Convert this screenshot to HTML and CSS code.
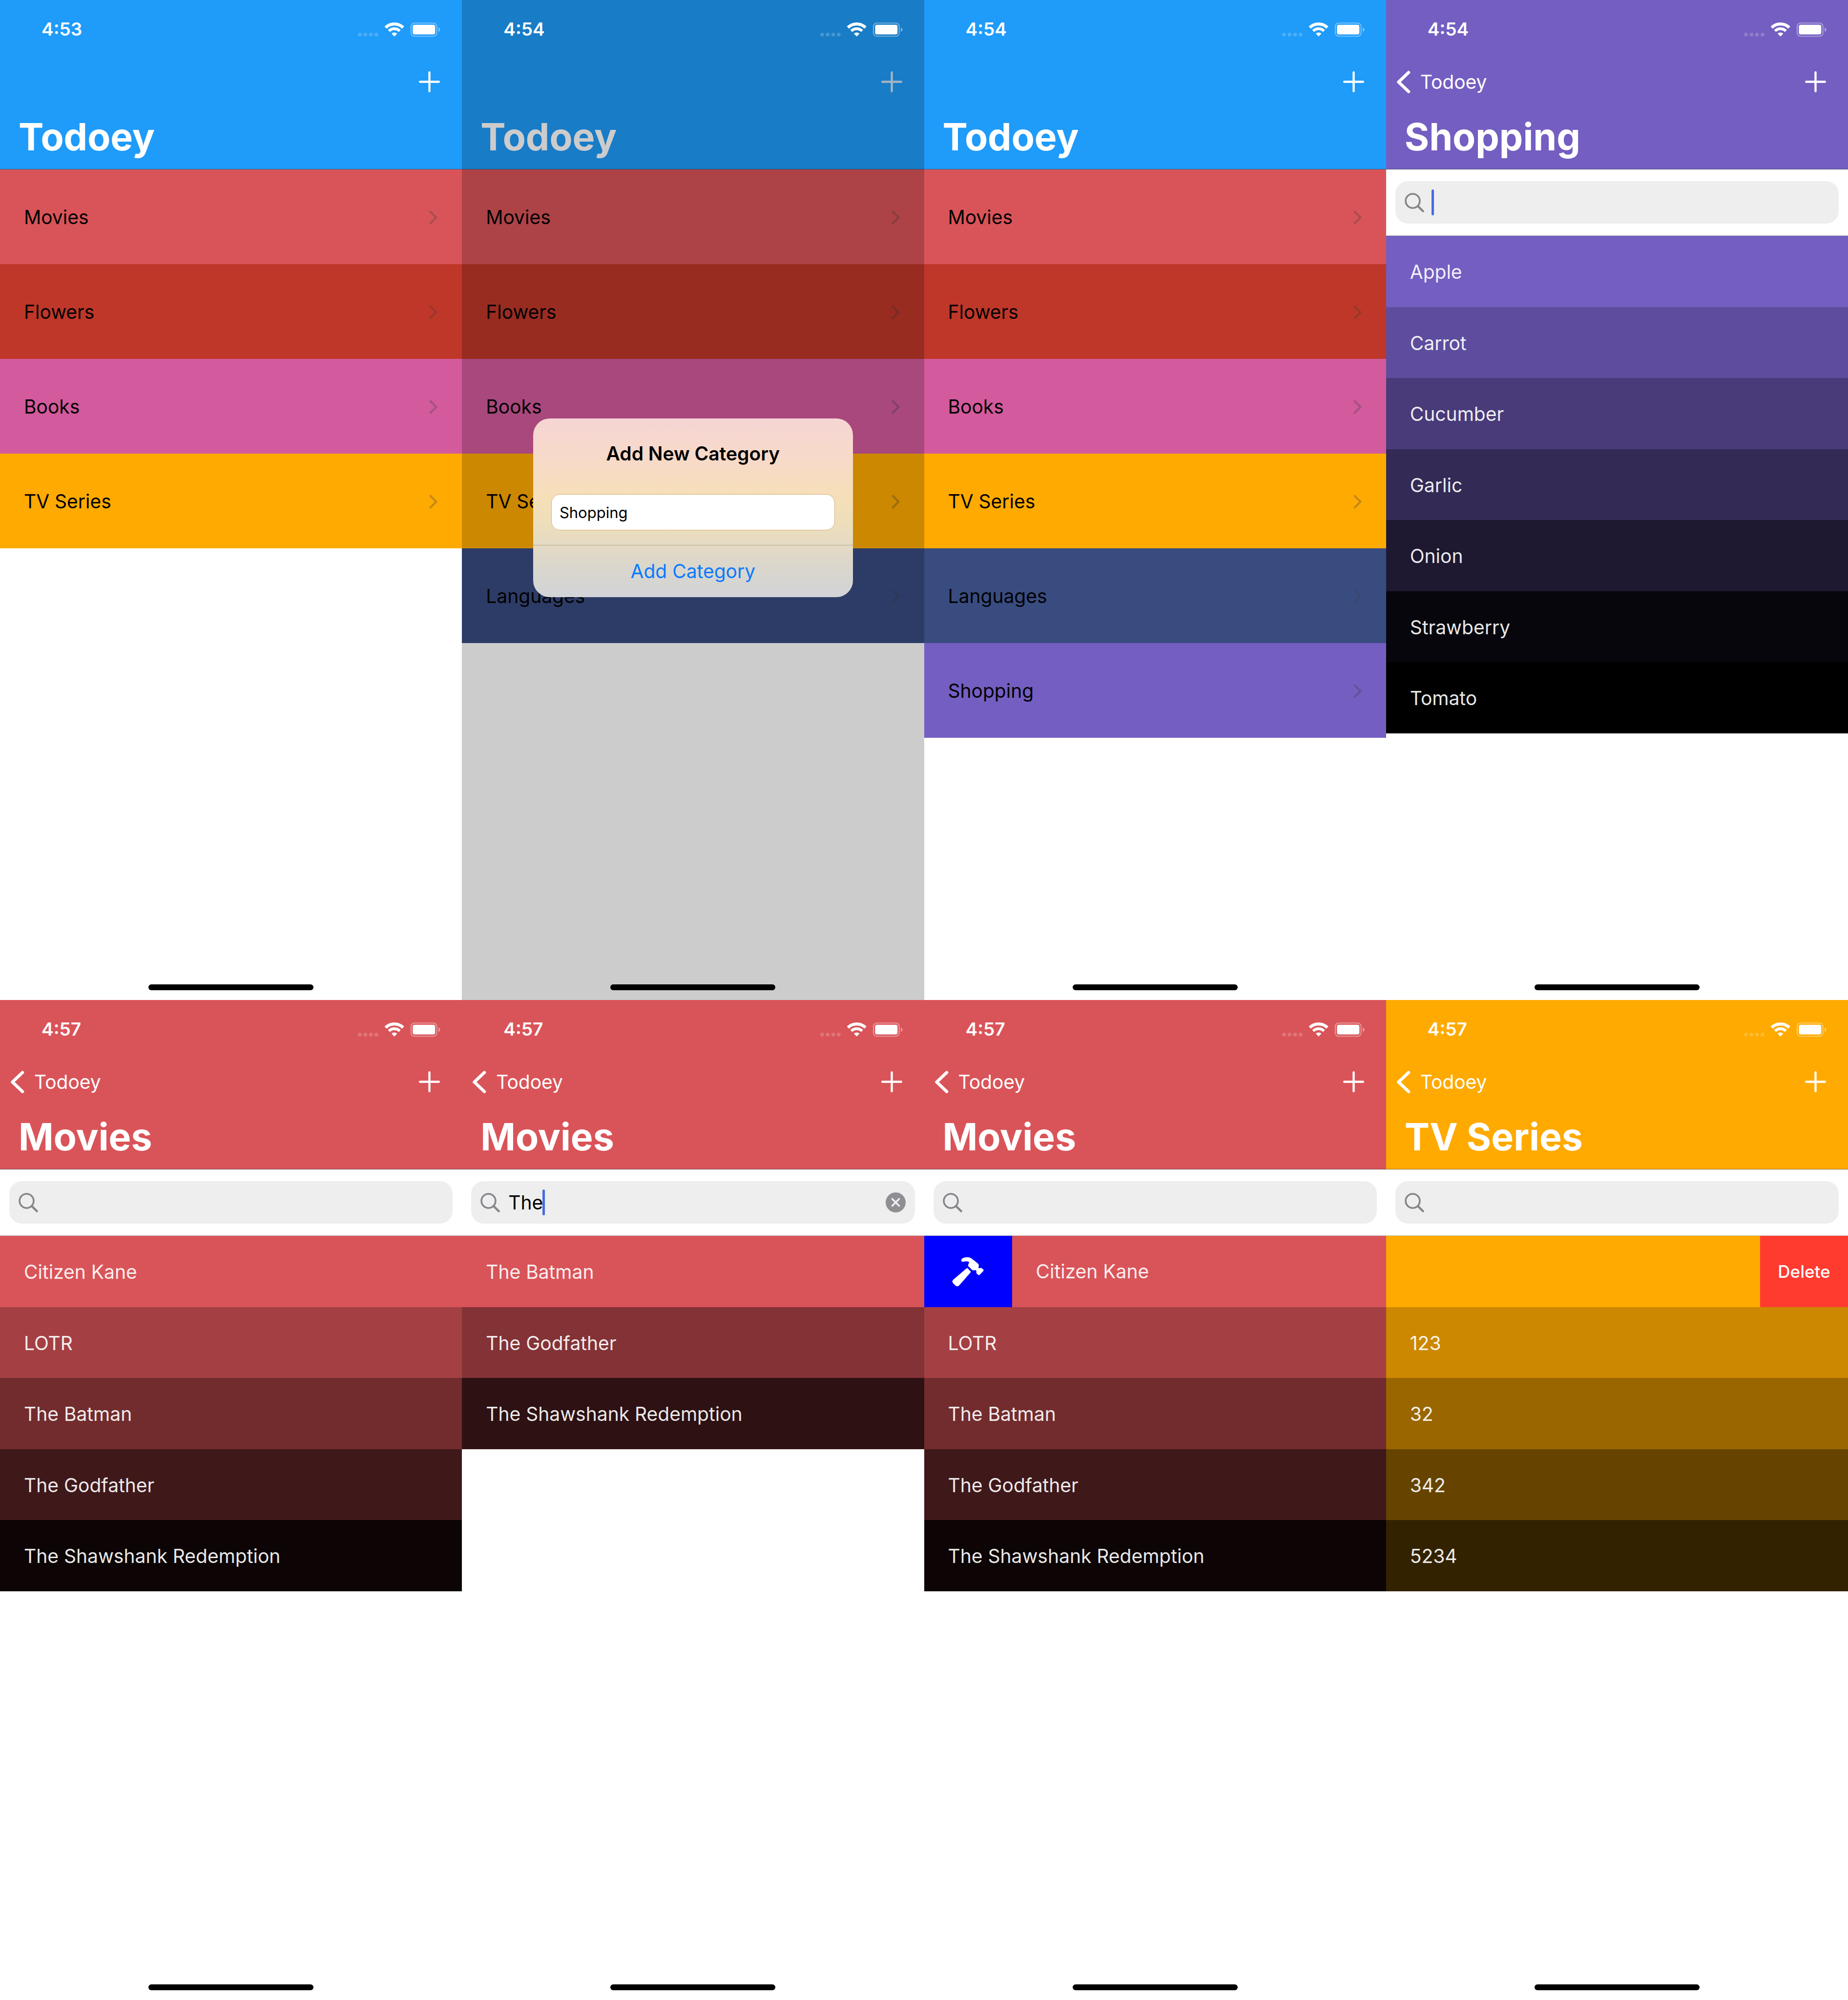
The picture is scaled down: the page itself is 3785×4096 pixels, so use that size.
FILE: index.html
```
<!DOCTYPE html>
<html lang="en">
<head>
<meta charset="utf-8">
<meta name="viewport" content="width=device-width, initial-scale=1">
<title>Todoey</title>
<link rel="stylesheet" href="styles.css">
</head>
<body>
<svg class="sprite" aria-hidden="true">
  <symbol id="status" viewBox="170 104 627 114">
    <g fill="currentColor" opacity=".2"><rect x="171" y="186" width="27" height="27" rx="8"/><rect x="213" y="186" width="27" height="27" rx="8"/><rect x="255" y="186" width="27" height="27" rx="8"/><rect x="297" y="186" width="27" height="27" rx="8"/></g>
    <g fill="none" stroke="currentColor"><path stroke-width="23" d="M380.500 146A94.500 94.500 0 0 1 513.500 146"/><path stroke-width="21" d="M406 172A58.500 58.500 0 0 1 488 172"/></g>
    <path fill="currentColor" stroke="currentColor" stroke-width="4" stroke-linejoin="round" d="M447 211L428.500 192A29 29 0 0 1 465.500 192Z"/>
    <rect x="574" y="112" width="196" height="100" rx="26" fill="none" stroke="currentColor" stroke-width="8" opacity=".4"/>
    <rect x="587" y="125" width="170" height="73" rx="14" fill="currentColor"/>
    <path fill="currentColor" opacity=".45" d="M783 145C790 148 795 154 795 162S790 176 783 179Z"/>
  </symbol>
  <symbol id="plus" viewBox="0 0 53 53"><path d="M26.500 2.700V50.300M2.700 26.500H50.300" fill="none" stroke="currentColor" stroke-width="5.400" stroke-linecap="round"/></symbol>
  <symbol id="back" viewBox="0 0 28 46"><path d="M24 3.500L3.500 23L24 42.500" fill="none" stroke="currentColor" stroke-width="6.500" stroke-linecap="round" stroke-linejoin="round"/></symbol>
  <symbol id="chevron" viewBox="0 0 17 29"><path d="M2.500 2.500L14.500 14.500L2.500 26.500" fill="none" stroke="currentColor" stroke-width="4" stroke-linecap="round" stroke-linejoin="round"/></symbol>
  <symbol id="search" viewBox="0 0 49 49"><g fill="none" stroke="currentColor" stroke-linecap="round"><circle cx="20.200" cy="20.200" r="17.700" stroke-width="4.400"/><path stroke-width="5.400" d="M33.500 33.500L46 46"/></g></symbol>
  <symbol id="clear" viewBox="0 0 41 41"><circle cx="20.500" cy="20.500" r="20.500" fill="#8e8e93"/><path d="M13.500 13.500L27.500 27.500M27.500 13.500L13.500 27.500" fill="none" stroke="#eeeeef" stroke-width="3.800" stroke-linecap="round"/></symbol>
  <symbol id="hammer" viewBox="63 61 240 240">
    <path fill="currentColor" d="M178 152L205 180C203 186 200 190 197 193L116 285Q102 297 88 285L69 266Q61 254 70 243L165 162Q172 157 178 152Z"/>
    <path fill="currentColor" d="M134 101C131 92 134 84 143 79C165 67 195 68 212 82L258 118Q267 127 265 140L262 152C268 155 276 153 284 152L299 163Q304 169 299 176L271 205Q264 210 258 203L247 192C246 185 247 178 246 173Q240 168 232 170L217 170L184 137C183 125 193 117 192 108C180 100 160 103 146 105Q138 107 134 101Z"/>
  </symbol>
</svg>

<main class="gallery">

  <section class="phone theme-blue">
    <header class="header">
      <div class="status"><time>4:53</time><svg class="status-icons"><use href="#status"/></svg></div>
      <nav class="nav"><button class="add" aria-label="Add"><svg><use href="#plus"/></svg></button></nav>
      <h1 class="title">Todoey</h1>
    </header>
    <ul class="categories">
      <li><a href="#" class="category red">Movies<svg><use href="#chevron"/></svg></a></li>
      <li><a href="#" class="category brick">Flowers<svg><use href="#chevron"/></svg></a></li>
      <li><a href="#" class="category pink">Books<svg><use href="#chevron"/></svg></a></li>
      <li><a href="#" class="category yellow">TV Series<svg><use href="#chevron"/></svg></a></li>
    </ul>
    <div class="home"></div>
  </section>

  <section class="phone theme-blue">
    <header class="header">
      <div class="status"><time>4:54</time><svg class="status-icons"><use href="#status"/></svg></div>
      <nav class="nav"><button class="add inactive" aria-label="Add"><svg><use href="#plus"/></svg></button></nav>
      <h1 class="title">Todoey</h1>
    </header>
    <ul class="categories">
      <li><a href="#" class="category red">Movies<svg><use href="#chevron"/></svg></a></li>
      <li><a href="#" class="category brick">Flowers<svg><use href="#chevron"/></svg></a></li>
      <li><a href="#" class="category pink">Books<svg><use href="#chevron"/></svg></a></li>
      <li><a href="#" class="category yellow">TV Series<svg><use href="#chevron"/></svg></a></li>
      <li><a href="#" class="category navy">Languages<svg><use href="#chevron"/></svg></a></li>
    </ul>
    <div class="home"></div>
    <div class="dim">
      <form class="alert" role="dialog" aria-labelledby="alert-title">
        <div class="alert-body">
          <h2 id="alert-title">Add New Category</h2>
          <input type="text" value="Shopping" aria-label="Category name">
        </div>
        <button type="button" class="alert-action">Add Category</button>
      </form>
    </div>
  </section>

  <section class="phone theme-blue">
    <header class="header">
      <div class="status"><time>4:54</time><svg class="status-icons"><use href="#status"/></svg></div>
      <nav class="nav"><button class="add" aria-label="Add"><svg><use href="#plus"/></svg></button></nav>
      <h1 class="title">Todoey</h1>
    </header>
    <ul class="categories">
      <li><a href="#" class="category red">Movies<svg><use href="#chevron"/></svg></a></li>
      <li><a href="#" class="category brick">Flowers<svg><use href="#chevron"/></svg></a></li>
      <li><a href="#" class="category pink">Books<svg><use href="#chevron"/></svg></a></li>
      <li><a href="#" class="category yellow">TV Series<svg><use href="#chevron"/></svg></a></li>
      <li><a href="#" class="category navy">Languages<svg><use href="#chevron"/></svg></a></li>
      <li><a href="#" class="category purple">Shopping<svg><use href="#chevron"/></svg></a></li>
    </ul>
    <div class="home"></div>
  </section>

  <section class="phone theme-purple">
    <header class="header">
      <div class="status"><time>4:54</time><svg class="status-icons"><use href="#status"/></svg></div>
      <nav class="nav"><a href="#" class="back"><svg><use href="#back"/></svg>Todoey</a><button class="add" aria-label="Add"><svg><use href="#plus"/></svg></button></nav>
      <h1 class="title">Shopping</h1>
    </header>
    <div class="search"><label class="field"><svg class="lens"><use href="#search"/></svg><input type="text" aria-label="Search"><span class="caret"></span></label></div>
    <ul class="items">
      <li style="background:#745ec1">Apple</li>
      <li style="background:#5e4d9e">Carrot</li>
      <li style="background:#493b79">Cucumber</li>
      <li style="background:#332a55">Garlic</li>
      <li style="background:#1e1830">Onion</li>
      <li style="background:#07060c">Strawberry</li>
      <li style="background:#000000">Tomato</li>
    </ul>
    <div class="home"></div>
  </section>

  <section class="phone theme-red">
    <header class="header">
      <div class="status"><time>4:57</time><svg class="status-icons"><use href="#status"/></svg></div>
      <nav class="nav"><a href="#" class="back"><svg><use href="#back"/></svg>Todoey</a><button class="add" aria-label="Add"><svg><use href="#plus"/></svg></button></nav>
      <h1 class="title">Movies</h1>
    </header>
    <div class="search"><label class="field"><svg class="lens"><use href="#search"/></svg><input type="text" aria-label="Search"></label></div>
    <ul class="items">
      <li style="background:#d95459">Citizen Kane</li>
      <li style="background:#a44043">LOTR</li>
      <li style="background:#722c2e">The Batman</li>
      <li style="background:#3f181a">The Godfather</li>
      <li style="background:#0c0405">The Shawshank Redemption</li>
    </ul>
    <div class="home"></div>
  </section>

  <section class="phone theme-red">
    <header class="header">
      <div class="status"><time>4:57</time><svg class="status-icons"><use href="#status"/></svg></div>
      <nav class="nav"><a href="#" class="back"><svg><use href="#back"/></svg>Todoey</a><button class="add" aria-label="Add"><svg><use href="#plus"/></svg></button></nav>
      <h1 class="title">Movies</h1>
    </header>
    <div class="search"><div class="field"><svg class="lens"><use href="#search"/></svg><input type="text" value="The" aria-label="Search"><span class="caret after-text"></span><button class="clear" aria-label="Clear"><svg><use href="#clear"/></svg></button></div></div>
    <ul class="items">
      <li style="background:#d95459">The Batman</li>
      <li style="background:#833236">The Godfather</li>
      <li style="background:#2d1113">The Shawshank Redemption</li>
    </ul>
    <div class="home"></div>
  </section>

  <section class="phone theme-red">
    <header class="header">
      <div class="status"><time>4:57</time><svg class="status-icons"><use href="#status"/></svg></div>
      <nav class="nav"><a href="#" class="back"><svg><use href="#back"/></svg>Todoey</a><button class="add" aria-label="Add"><svg><use href="#plus"/></svg></button></nav>
      <h1 class="title">Movies</h1>
    </header>
    <div class="search"><label class="field"><svg class="lens"><use href="#search"/></svg><input type="text" aria-label="Search"></label></div>
    <ul class="items">
      <li class="swiped" style="background:#d95459"><button class="action edit" aria-label="Edit"><svg><use href="#hammer"/></svg></button><span>Citizen Kane</span></li>
      <li style="background:#a44043">LOTR</li>
      <li style="background:#722c2e">The Batman</li>
      <li style="background:#3f181a">The Godfather</li>
      <li style="background:#0c0405">The Shawshank Redemption</li>
    </ul>
    <div class="home"></div>
  </section>

  <section class="phone theme-yellow">
    <header class="header">
      <div class="status"><time>4:57</time><svg class="status-icons"><use href="#status"/></svg></div>
      <nav class="nav"><a href="#" class="back"><svg><use href="#back"/></svg>Todoey</a><button class="add" aria-label="Add"><svg><use href="#plus"/></svg></button></nav>
      <h1 class="title">TV Series</h1>
    </header>
    <div class="search"><label class="field"><svg class="lens"><use href="#search"/></svg><input type="text" aria-label="Search"></label></div>
    <ul class="items">
      <li class="swiped" style="background:#ffaa00"><button class="action delete">Delete</button></li>
      <li style="background:#cc8800">123</li>
      <li style="background:#996600">32</li>
      <li style="background:#664400">342</li>
      <li style="background:#332200">5234</li>
    </ul>
    <div class="home"></div>
  </section>

</main>
</body>
</html>
```
FILE: styles.css
```
* { box-sizing: border-box; }

body {
  margin: 0;
  background: #fff;
  color: #000;
  font: 400 39px/48px Inter, "Liberation Sans", sans-serif;
}

h1, h2, ul { margin: 0; padding: 0; }
ul { list-style: none; }
a { color: inherit; text-decoration: none; }
svg { display: block; flex: none; }
button {
  border: 0;
  padding: 0;
  background: none;
  color: inherit;
  font: inherit;
}
input {
  border: 0;
  outline: 0;
  background: none;
  color: #000;
  font: inherit;
}

.sprite { position: absolute; width: 0; height: 0; }

.gallery {
  display: grid;
  grid-template-columns: repeat(4, 1fr);
  grid-auto-rows: 50vh;
}

.phone {
  position: relative;
  display: flex;
  flex-direction: column;
  min-width: 0;
  background: #fff;
}

/* Header */
.header {
  color: #fff;
  background: var(--tint);
  border-bottom: 1px solid rgba(60, 60, 67, .6);
}
.theme-blue { --tint: #1f9bf9; }
.theme-purple { --tint: #745ec1; }
.theme-red { --tint: #d95459; }
.theme-yellow { --tint: #ffaa00; }

/* The status bar stays above the dimming layer of an alert */
.status {
  position: relative;
  z-index: 1;
  display: flex;
  align-items: center;
  justify-content: space-between;
  height: 114px;
  padding: 6px 44px 0 85px;
  font-size: 37px;
  font-weight: 600;
}
.status-icons { width: 169px; height: 31px; }

.nav {
  display: flex;
  align-items: center;
  height: 107px;
  padding: 0 45px 0 22px;
}
.back { display: flex; align-items: center; gap: 20px; }
.back svg { width: 28px; height: 46px; }
.add { margin-left: auto; }
.add svg { width: 43px; height: 43px; }
.inactive { color: #cbe4f4; }

.title {
  padding: 0 38px 7px;
  font-size: 77px;
  font-weight: 700;
  line-height: 118px;
}

/* Category list */
.category {
  display: flex;
  align-items: center;
  justify-content: space-between;
  height: 194px;
  padding: 2px 50px 0 49px;
}
.category svg { width: 17px; height: 29px; color: rgba(60, 60, 67, .3); }
.red { background: #d95459; }
.brick { background: #bf3729; }
.pink { background: #d35a9c; }
.yellow { background: #ffaa00; }
.navy { background: #394c80; }
.purple { background: #745ec1; }

/* Search bar */
.search {
  padding: 24px 19px;
  border-bottom: 1px solid rgba(60, 60, 67, .3);
}
.field {
  position: relative;
  display: flex;
  align-items: center;
  gap: 17px;
  height: 87px;
  padding: 0 19px;
  border-radius: 26px;
  background: #eeeeef;
}
.field input { flex: 1; min-width: 0; padding: 0; }
.lens { width: 40px; height: 40px; color: #85858a; }
.clear svg { width: 41px; height: 41px; }
.caret {
  position: absolute;
  left: 74px;
  width: 5px;
  height: 53px;
  border-radius: 3px;
  background: #476be0;
}
.after-text { left: 146px; }

/* Item list */
.items li {
  display: flex;
  align-items: center;
  height: 146px;
  padding: 2px 0 0 49px;
  color: rgba(255, 255, 255, .93);
}
.items li:nth-child(even) { height: 145px; }
.items .swiped { gap: 49px; padding: 0; }
.action {
  display: flex;
  align-items: center;
  justify-content: center;
  align-self: stretch;
  width: 180px;
  color: #fff;
}
.action svg { width: 65px; height: 65px; }
.edit { background: #0000ff; }
.delete {
  margin-left: auto;
  background: #ff3b30;
  font-size: 35px;
  font-weight: 500;
}

.home {
  width: 338px;
  height: 12px;
  margin: auto auto 20px;
  border-radius: 6px;
  background: #000;
}

/* Alert over a dimmed screen */
.dim {
  position: absolute;
  inset: 0;
  display: flex;
  flex-direction: column;
  align-items: center;
  padding-top: 857px;
  background: rgba(0, 0, 0, .2);
}
.alert {
  width: 655px;
  overflow: hidden;
  border-radius: 34px;
  background: linear-gradient(#f6d5d4, #f7dac9 22%, #f6dfb8 44%, #eedeba 58%, #e5dac3 70%, #d9d6cd 84%, #d2d3d8);
}
.alert-body { padding: 48px 37px 30px; }
.alert h2 {
  font-size: 39px;
  font-weight: 600;
  line-height: 48px;
  text-align: center;
}
.alert input {
  display: block;
  width: 100%;
  height: 74px;
  margin-top: 59px;
  padding: 0 16px;
  border: 1px solid #d2b27c;
  border-radius: 18px;
  background: #fff;
  font-size: 31px;
}
.alert-action {
  display: block;
  width: 100%;
  height: 107px;
  border-top: 1px solid #b8a987;
  color: #0a7aff;
}
```
